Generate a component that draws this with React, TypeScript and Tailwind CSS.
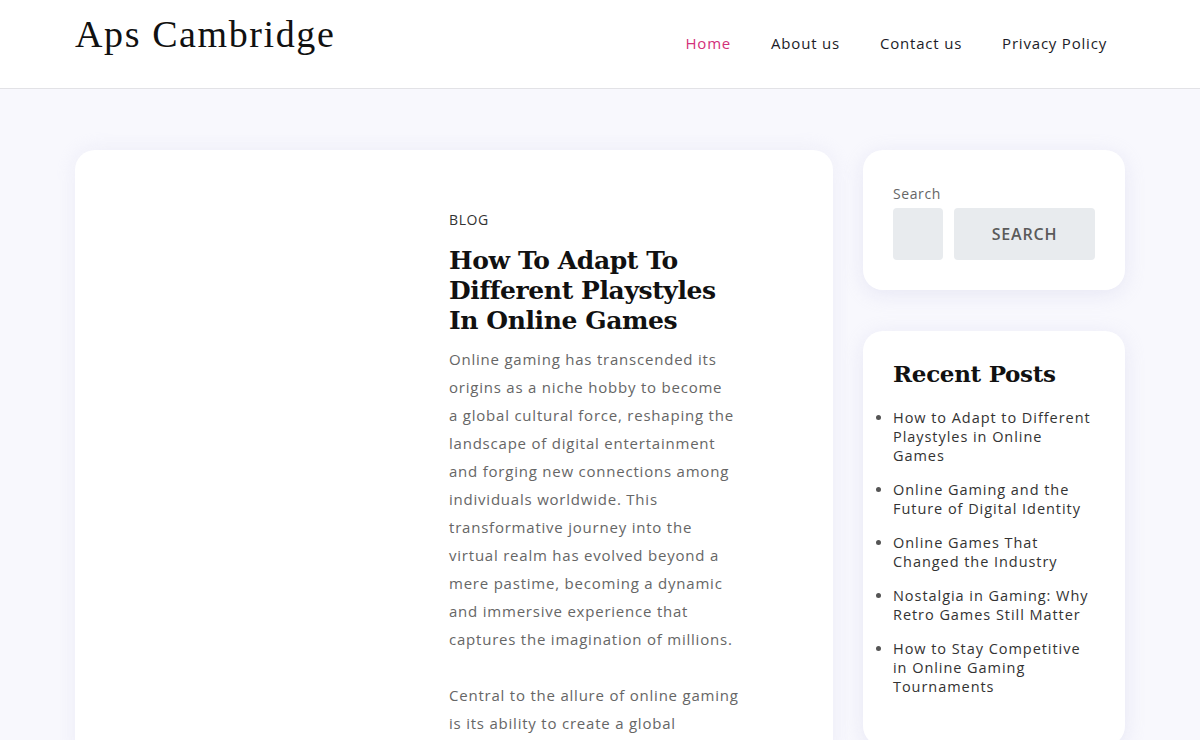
import React from 'react';

const sans = { fontFamily: '"Open Sans", "Noto Sans", Arial, sans-serif' };

const navLinks = ['Home', 'About us', 'Contact us', 'Privacy Policy'];

const recentPosts = [
  'How to Adapt to Different Playstyles in Online Games',
  'Online Gaming and the Future of Digital Identity',
  'Online Games That Changed the Industry',
  'Nostalgia in Gaming: Why Retro Games Still Matter',
  'How to Stay Competitive in Online Gaming Tournaments',
];

const Header = () => (
  <header className="flex h-[89px] items-start justify-between border-b border-[#e2e2e6] bg-white pl-[75px] pr-[93px]">
    <h1 className="mt-[12px] font-['Liberation_Serif',serif] text-[38px] leading-[44px] tracking-[1.6px] text-[#111]">
      Aps Cambridge
    </h1>
    <nav className="mt-[32px] flex gap-[40px] text-[15px] tracking-[0.8px]" style={sans}>
      {navLinks.map((link, i) => (
        <a key={link} href="#" className={i === 0 ? 'text-[#d3307a]' : 'text-[#1c1c28]'}>
          {link}
        </a>
      ))}
    </nav>
  </header>
);

const Article = () => (
  <article className="flex h-[620px] w-[758px] rounded-[20px] bg-white pt-[60px] shadow-[0_0_20px_rgba(220,220,240,0.4)]">
    <div className="w-[374px] shrink-0" />
    <div className="w-[290px]">
      <p className="text-[14px] leading-[20px] tracking-[0.6px] text-[#333]" style={sans}>BLOG</p>
      <h2 className="mt-[16px] font-['DejaVu_Serif',serif] text-[25px] font-bold leading-[30px] tracking-[-0.4px] text-[#111]">
        How To Adapt To Different Playstyles In Online Games
      </h2>
      <div className="mt-[9px] text-[15px] leading-[28px] tracking-[0.78px] text-[#666]" style={sans}>
        <p>
          Online gaming has transcended its origins as a niche hobby to become a&nbsp;global cultural force, reshaping
          the landscape of digital entertainment and forging new connections among individuals worldwide. This
          transformative journey into the virtual realm has evolved beyond a mere pastime, becoming a dynamic and
          immersive experience that captures the imagination of millions.
        </p>
        <p className="mt-[28px]">
          Central to the allure of online gaming is its ability to create a global community of players who share
          their passion across borders.
        </p>
      </div>
    </div>
  </article>
);

const SearchWidget = () => (
  <div className="rounded-[20px] bg-white px-[30px] pb-[30px] pt-[35px] shadow-[0_4px_20px_rgba(210,210,235,0.45)]">
    <label className="block text-[14px] leading-[18px] tracking-[0.6px] text-[#666]" style={sans}>Search</label>
    <div className="mt-[5px] flex gap-[11px]">
      <div className="h-[52px] w-[50px] rounded-[4px] bg-[#e8ebee]" />
      <button className="h-[52px] w-[141px] rounded-[4px] bg-[#e8ebee] text-[16px] font-semibold tracking-[0.8px] text-[#5a5a5a]" style={sans}>
        SEARCH
      </button>
    </div>
  </div>
);

const RecentPosts = () => (
  <div className="rounded-[20px] bg-white px-[30px] pb-[50px] pt-[27px] shadow-[0_4px_20px_rgba(210,210,235,0.45)]">
    <h3 className="font-['DejaVu_Serif',serif] text-[23px] font-bold leading-[32px] tracking-[-0.3px] text-[#111]">Recent Posts</h3>
    <ul className="mt-[18px] flex list-disc flex-col gap-[15px] marker:text-[#555]" style={sans}>
      {recentPosts.map((post) => (
        <li key={post} className="text-[14.5px] leading-[19px] tracking-[0.95px] text-[#333]">
          {post}
        </li>
      ))}
    </ul>
  </div>
);

export default function App() {
  return (
    <div className="min-h-[740px] bg-[#f8f8fd]">
      <Header />
      <main className="flex gap-[30px] pl-[75px] pt-[61px]">
        <Article />
        <aside className="flex w-[262px] flex-col gap-[41px]">
          <SearchWidget />
          <RecentPosts />
        </aside>
      </main>
    </div>
  );
}
